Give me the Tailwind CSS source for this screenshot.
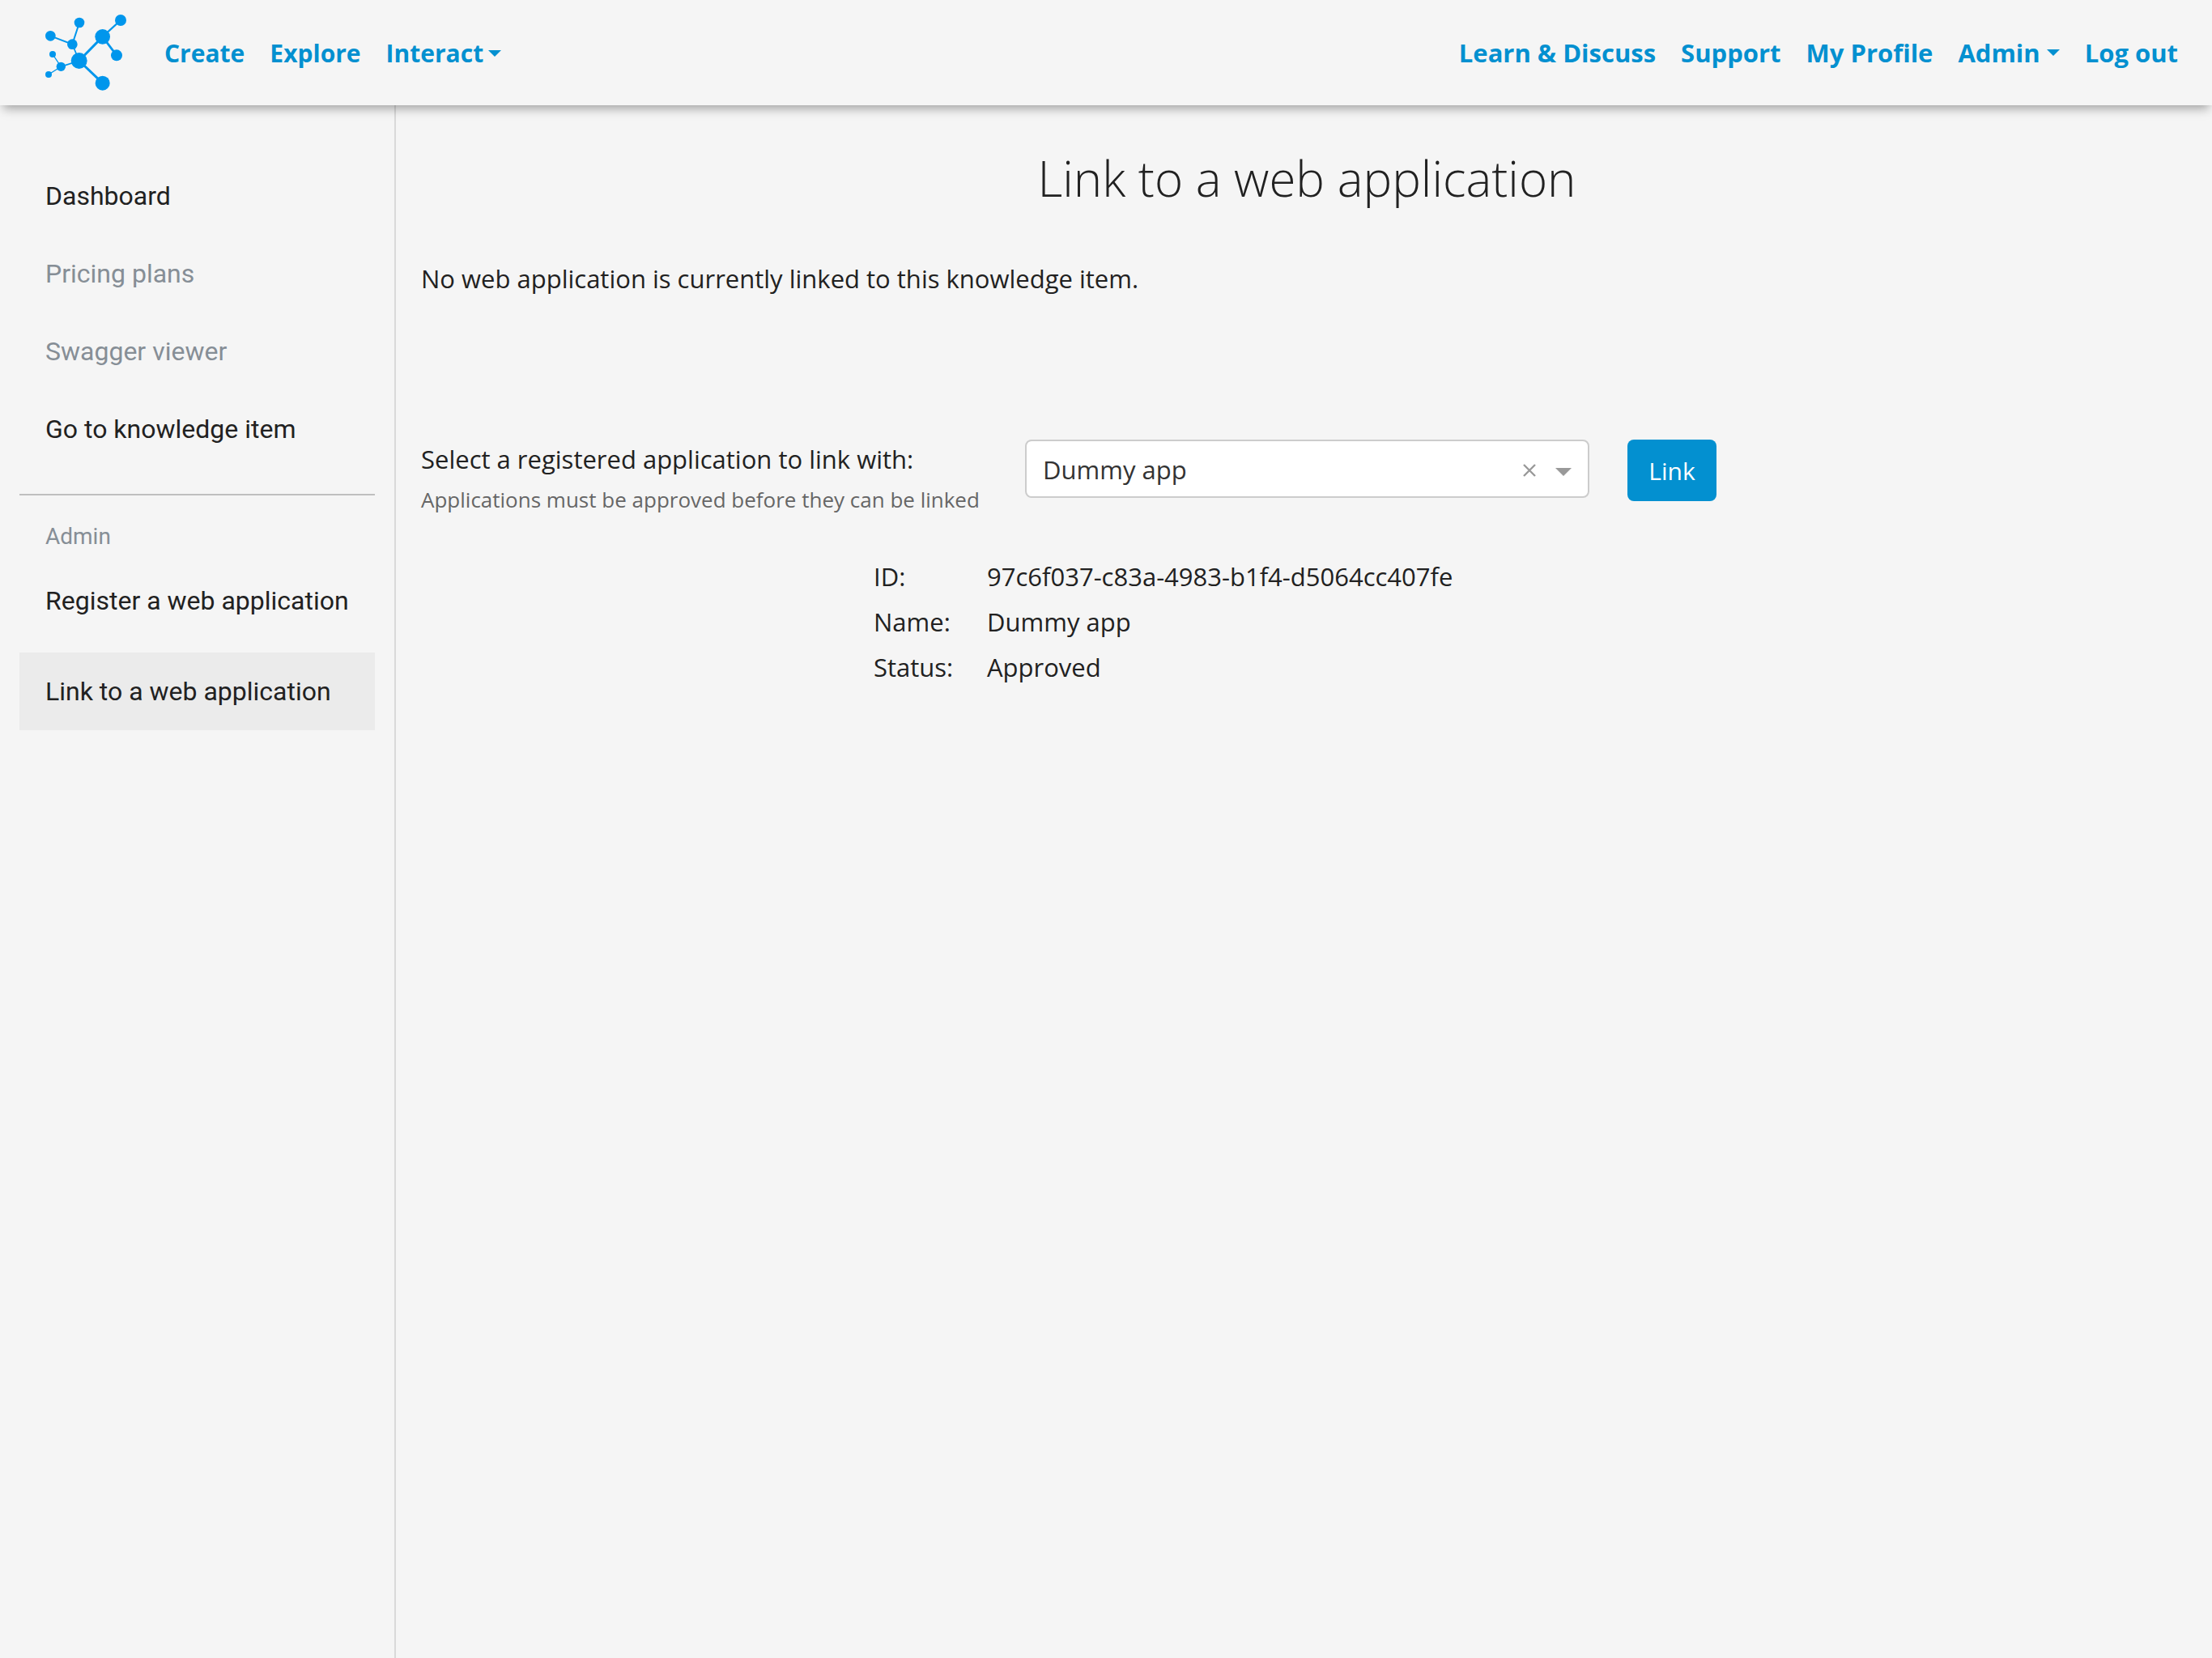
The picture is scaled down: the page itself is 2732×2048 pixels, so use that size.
<!DOCTYPE html>
<html lang="en">
<head>
<meta charset="utf-8">
<meta name="viewport" content="width=device-width, initial-scale=1">
<title>Link to a web application</title>
<script src="https://cdn.jsdelivr.net/npm/@tailwindcss/browser@4"></script>
</head>
<body class="flex min-h-screen flex-col bg-[#f5f5f5] font-['Open_Sans',sans-serif] text-[31px] leading-[48px] text-[#212121]">

<header class="relative z-10 flex h-[130px] items-center justify-between bg-[#f5f5f5] pr-[42px] pl-14 font-bold text-[#0390d0] shadow-[0_8px_12px_-4px_rgba(0,0,0,0.35)]">
  <nav class="flex items-center gap-[46px] text-[30px]" aria-label="Main">
    <a href="#" aria-label="Home">
      <svg class="h-24 w-[101px]" viewBox="48 21 303 288" fill="#0096ec" stroke="#0096ec" aria-hidden="true">
        <g fill="none">
          <path d="M327 45 260 106" stroke-width="7"/>
          <path d="M260 106 312 175" stroke-width="8"/>
          <path d="M260 106 173 195" stroke-width="9"/>
          <path d="M173 195 260 278" stroke-width="9"/>
          <path d="M173 195 148 134" stroke-width="5"/>
          <path d="M174 54 148 134 67 103" stroke-width="6"/>
          <path d="M173 195 106 217" stroke-width="5"/>
          <path d="M75 171 106 217 60 246" stroke-width="4"/>
        </g>
        <g stroke="none">
          <circle cx="327" cy="45" r="21"/>
          <circle cx="260" cy="106" r="28"/>
          <circle cx="312" cy="175" r="21"/>
          <circle cx="174" cy="54" r="19"/>
          <circle cx="67" cy="103" r="19"/>
          <circle cx="148" cy="134" r="19"/>
          <circle cx="173" cy="195" r="30"/>
          <circle cx="75" cy="171" r="12"/>
          <circle cx="106" cy="217" r="17"/>
          <circle cx="60" cy="246" r="12"/>
          <circle cx="260" cy="278" r="27"/>
        </g>
      </svg>
    </a>
    <div class="flex gap-[31px] pt-0.5">
      <a href="#">Create</a>
      <a href="#">Explore</a>
      <a href="#" class="flex items-center gap-1.5">Interact
        <svg class="h-2 w-4" viewBox="0 0 16 8" fill="currentColor" aria-hidden="true"><path d="M0 0h16L8 8z"/></svg>
      </a>
    </div>
  </nav>
  <nav class="flex gap-[31px]" aria-label="Account">
    <a href="#">Learn &amp; Discuss</a>
    <a href="#">Support</a>
    <a href="#">My Profile</a>
    <a href="#" class="flex items-center gap-2">Admin
      <svg class="h-2 w-4" viewBox="0 0 16 8" fill="currentColor" aria-hidden="true"><path d="M0 0h16L8 8z"/></svg>
    </a>
    <a href="#">Log out</a>
  </nav>
</header>

<div class="flex flex-1">
  <aside class="w-[489px] shrink-0 border-r-2 border-[#d9d9d9] px-6 pt-16 font-[Roboto,sans-serif] text-[32px]">
    <nav class="flex flex-col" aria-label="Knowledge item">
      <a href="#" class="px-8 py-6">Dashboard</a>
      <a href="#" class="px-8 py-6 text-[#868e96]">Pricing plans</a>
      <a href="#" class="px-8 py-6 text-[#868e96]">Swagger viewer</a>
      <a href="#" class="px-8 py-6">Go to knowledge item</a>
    </nav>
    <hr class="mt-8 border-t-2 border-[#bfbfbf]">
    <h2 class="px-8 pt-[29px] pb-[9px] text-[28px] leading-11 text-[#868e96]">Admin</h2>
    <nav class="flex flex-col gap-4" aria-label="Admin">
      <a href="#" class="px-8 py-6 whitespace-nowrap">Register a web application</a>
      <a href="#" class="bg-[#ebebeb] px-8 py-6" aria-current="page">Link to a web application</a>
    </nav>
  </aside>

  <main class="flex-1 pt-[50px] pr-6 pl-[31px]">
    <h1 class="text-center text-[60px] leading-20 font-light">Link to a web application</h1>
    <p class="mt-15">No web application is currently linked to this knowledge item.</p>

    <form class="mt-[175px] flex items-start">
      <div class="w-[746px] shrink-0">
        <label for="app">Select a registered application to link with:</label>
        <p id="app-help" class="text-[26px] leading-[52px] text-[#666666]">Applications must be approved before they can be linked</p>
      </div>
      <div class="relative w-[697px]">
        <select id="app" aria-describedby="app-help" class="h-[72px] w-full appearance-none rounded-lg border-2 border-[#cccccc] bg-white px-5 pt-0.5 text-[#333333]">
          <option>Dummy app</option>
        </select>
        <button type="button" aria-label="Clear" class="absolute top-0 right-[58px] flex h-[76px] w-8 items-center justify-center text-[#999999]">
          <svg class="size-4" viewBox="0 0 16 16" stroke="currentColor" stroke-width="2.4" aria-hidden="true"><path d="M1 1l14 14M15 1L1 15"/></svg>
        </button>
        <svg class="pointer-events-none absolute top-[35px] right-[22px] h-2.5 w-5 text-[#999999]" viewBox="0 0 20 10" fill="currentColor" aria-hidden="true"><path d="M0 0h20L10 10z"/></svg>
      </div>
      <button type="submit" class="ml-[47px] h-[76px] w-[110px] rounded-lg bg-[#0390d0] pt-0.5 text-[30px] text-white">Link</button>
    </form>

    <table class="mt-[41px] ml-[559px] text-left">
      <tbody>
        <tr><th scope="row" class="w-[140px] py-1 font-normal">ID:</th><td class="py-1">97c6f037-c83a-4983-b1f4-d5064cc407fe</td></tr>
        <tr><th scope="row" class="py-1 font-normal">Name:</th><td class="py-1">Dummy app</td></tr>
        <tr><th scope="row" class="py-1 font-normal">Status:</th><td class="py-1">Approved</td></tr>
      </tbody>
    </table>
  </main>
</div>
</body>
</html>
